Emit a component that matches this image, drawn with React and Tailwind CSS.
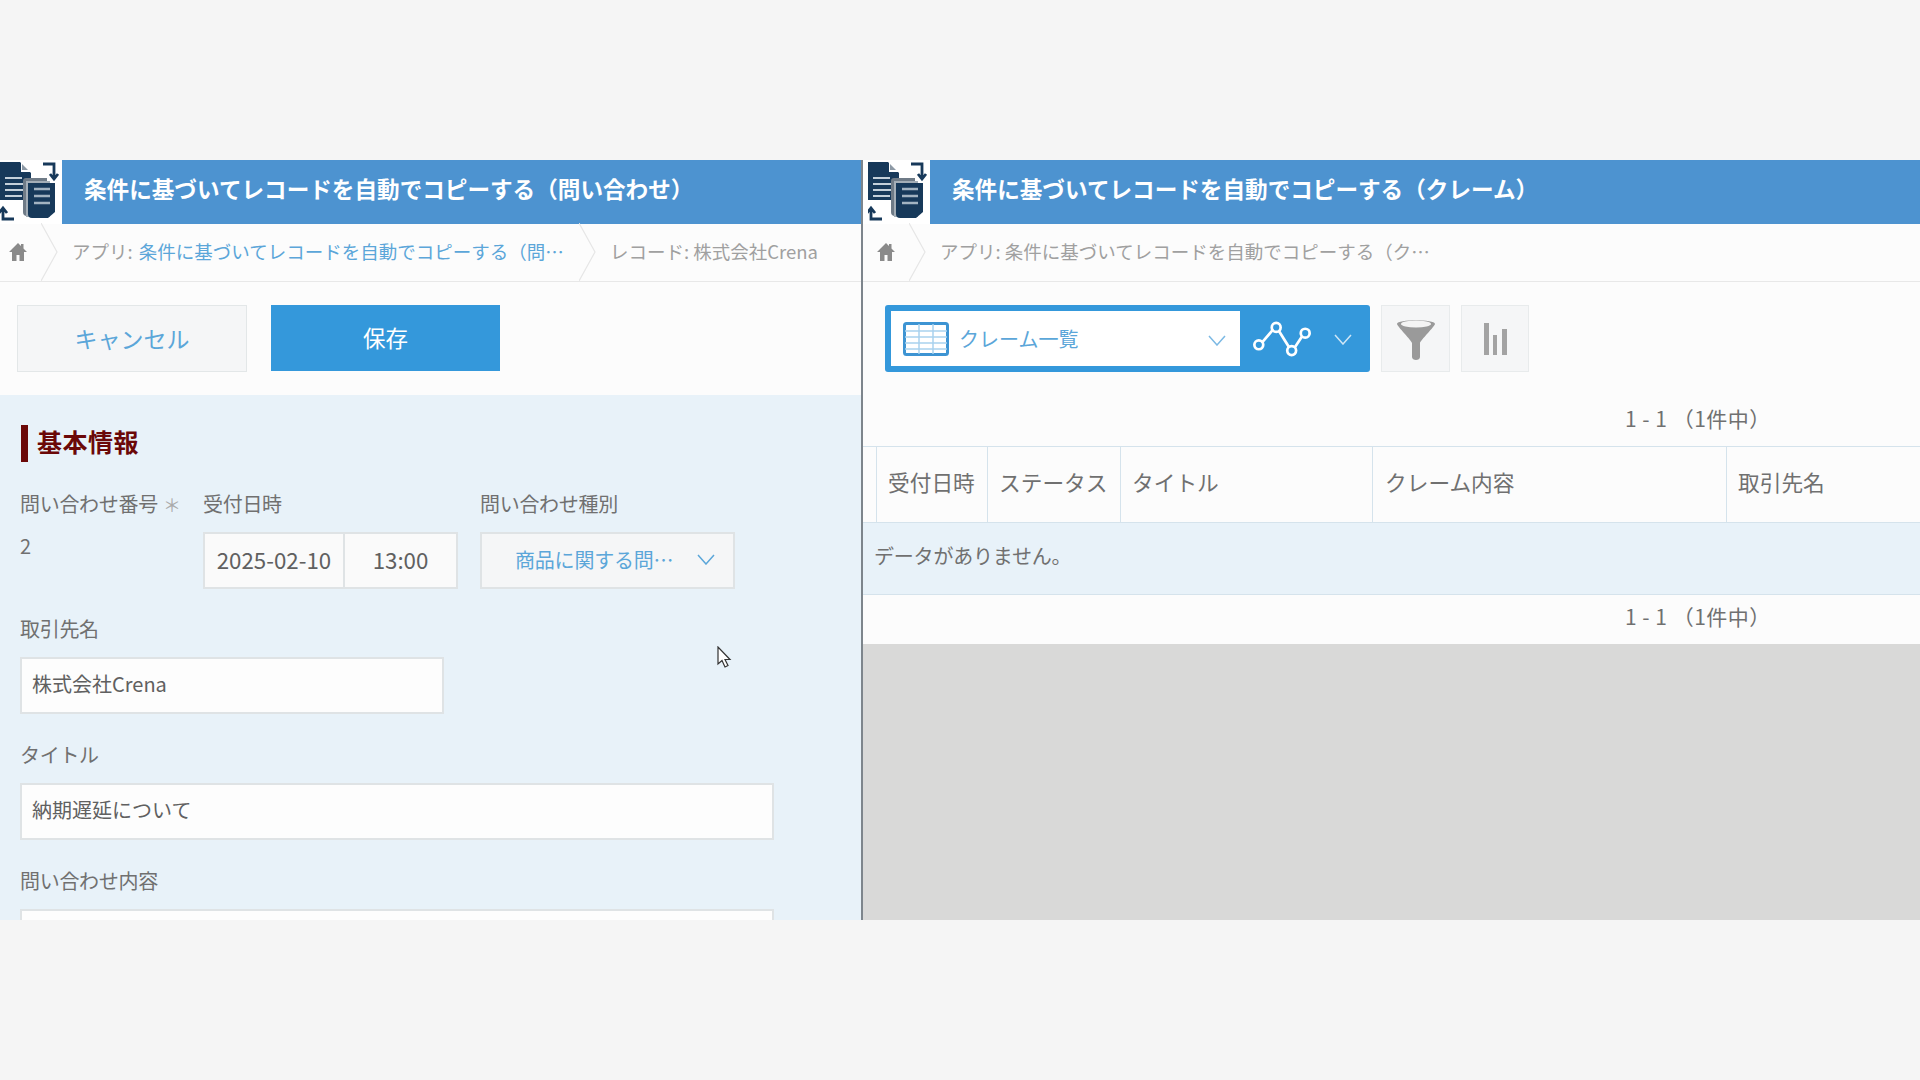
import React from "react";

const Logo = () => (
  <svg viewBox="0 0 62 64" className="w-[62px] h-[64px] shrink-0 block">
    <path d="M0 2H20L31 13V40H0Z" fill="#17395a" />
    <path d="M21 1L32 12H21Z" fill="#fff" />
    <path d="M22 4L28 10H22Z" fill="#8d99a5" />
    <path d="M5 18H22M5 24H23M5 30H23M5 36H22" stroke="#c4d0da" strokeWidth="2.2" />
    <path d="M23 21Q23 18 26 18H47V56H27Q23 56 23 52Z" fill="#6f7b87" />
    <path d="M26 21H50V57H26Z" fill="#a4aeb7" />
    <path d="M28 23H55V52L48 58H32Q28 58 28 54Z" fill="#17395a" />
    <path d="M34 29H50M34 36H50M34 43H50" stroke="#a3b3c1" strokeWidth="2.4" />
    <path d="M43 4H54V17M50 14L54 19L58 14" stroke="#17395a" strokeWidth="2.8" fill="none" />
    <path d="M3 49V59H14M-1 53L3 48L7 53" stroke="#17395a" strokeWidth="2.8" fill="none" />
  </svg>
);

const Home = () => (
  <svg viewBox="0 0 20 20" className="w-[20px] h-[20px] block">
    <path d="M10 1L1 10H4V19H8.5V13H11.5V19H16V10H19L15.5 6.5V2H13V4Z" fill="#8a8a8a" />
  </svg>
);

const Sep = () => (
  <svg viewBox="0 0 18 58" className="w-[18px] h-[58px] shrink-0 block">
    <path d="M0 0L16 29L0 58" fill="none" stroke="#e6e6e6" strokeWidth="1.2" />
  </svg>
);

const Chev = ({ color, w = 18, className = "" }) => (
  <svg viewBox="0 0 18 11" style={{ width: w }} className={`block shrink-0 ${className}`}>
    <path d="M1 1L9 10L17 1" fill="none" stroke={color} strokeWidth="1.5" />
  </svg>
);

const Label = ({ children, className = "" }) => (
  <div className={`text-[20px] leading-[28px] text-[#707070] tracking-[-0.3px] whitespace-nowrap ${className}`}>{children}</div>
);

const TextInput = ({ className, children }) => (
  <div className={`h-[57px] bg-[#fdfdfd] border-2 border-[#dfe3e5] flex items-center px-[10px] pb-[3px] text-[20px] text-[#606060] whitespace-nowrap ${className}`}>
    {children}
  </div>
);

const Pager = ({ className }) => (
  <div className={`shrink-0 flex items-center pl-[762px] text-[21px] tracking-[0.5px] text-[#707070] whitespace-pre ${className}`}>1 - 1 （1件中）</div>
);

const columns = [
  ["w-[14px]", ""],
  ["w-[111px] pl-[11px]", "受付日時"],
  ["w-[133px] pl-[11px]", "ステータス"],
  ["w-[252px] pl-[11px]", "タイトル"],
  ["w-[354px] pl-[12px]", "クレーム内容"],
  ["flex-1 pl-[11px]", "取引先名"],
];

const Title = ({ children }) => (
  <div className="flex-1 min-w-0 bg-[#4d93d0] flex items-center pl-[22px] pb-[6px] text-white font-bold text-[22.6px] whitespace-nowrap">
    {children}
  </div>
);

export default function App() {
  return (
    <div className="w-[1920px] h-[1080px] overflow-hidden bg-[#f5f5f5] flex flex-col pt-[160px] font-['Noto_Sans_CJK_JP','Noto_Sans',sans-serif] relative">
      <div className="flex h-[760px]">
        {/* Left */}
        <div className="w-[861px] flex flex-col overflow-hidden bg-[#fcfcfc]">
          <div className="flex h-[64px] shrink-0 bg-white">
            <Logo />
            <Title>条件に基づいてレコードを自動でコピーする（問い合わせ）</Title>
          </div>
          <div className="h-[58px] shrink-0 flex items-center border-b border-[#e8e8e8] pl-[8px] pb-[2px] text-[18.5px] text-[#a0a0a0] whitespace-nowrap">
            <div className="w-[33px]"><Home /></div>
            <Sep />
            <div className="ml-[13px] w-[507px]">アプリ: <span className="ml-[2px] text-[#5ba6d9]">条件に基づいてレコードを自動でコピーする（問…</span></div>
            <Sep />
            <div className="ml-[13px]">レコード: 株式会社Crena</div>
          </div>
          <div className="h-[113px] shrink-0 flex items-center pl-[17px] gap-[24px] pb-[1px]">
            <div className="w-[230px] h-[67px] bg-[#f5f6f7] border border-[#e3e7e8] flex items-center justify-center text-[23px] text-[#5ba6d9]">キャンセル</div>
            <div className="w-[229px] h-[66px] bg-[#3498db] flex items-center justify-center text-[22.5px] text-white">保存</div>
          </div>
          <div className="flex-1 overflow-hidden bg-[#e8f2f9] pl-[20px]">
            <div className="mt-[30px] flex items-center h-[37px] ml-[1px] border-l-[7px] border-[#6b0808] pl-[9px] pb-[4px] text-[25px] font-bold text-[#6b0808] tracking-[0.5px]">基本情報</div>
            <div className="flex mt-[28px]">
              <div className="w-[183px]">
                <Label>問い合わせ番号 <span className="text-[#aaaaaa] text-[18px] ml-[1px]">＊</span></Label>
                <div className="mt-[14px] text-[20px] leading-[28px] text-[#707070]">2</div>
              </div>
              <div className="w-[277px]">
                <Label>受付日時</Label>
                <div className="flex mt-[14px]">
                  <div className="w-[142px] h-[57px] bg-[#fafafa] border-2 border-[#dfe3e5] flex items-center justify-center pb-[2px] text-[22.3px] text-[#606060]">2025-02-10</div>
                  <div className="w-[113px] h-[57px] bg-[#fafafa] border-2 border-l-0 border-[#dfe3e5] flex items-center justify-center pb-[2px] text-[22.3px] text-[#606060]">13:00</div>
                </div>
              </div>
              <div>
                <Label>問い合わせ種別</Label>
                <div className="mt-[14px] w-[255px] h-[57px] bg-[#f5f6f7] border-2 border-[#dfe3e5] flex items-center pl-[33px] pr-[18px] pb-[2px] justify-between text-[20px] text-[#5ba6d9] tracking-[-0.2px]">
                  <span className="whitespace-nowrap">商品に関する問…</span>
                  <Chev color="#5ba6d9" />
                </div>
              </div>
            </div>
            <Label className="mt-[26px]">取引先名</Label>
            <TextInput className="mt-[14px] w-[424px]">株式会社Crena</TextInput>
            <Label className="mt-[27px]">タイトル</Label>
            <TextInput className="mt-[14px] w-[754px]">納期遅延について</TextInput>
            <Label className="mt-[27px]">問い合わせ内容</Label>
            <TextInput className="mt-[14px] w-[754px]"></TextInput>
          </div>
        </div>
        <div className="w-[2px] bg-[#7d858c]" />
        {/* Right */}
        <div className="flex-1 min-w-0 flex flex-col overflow-hidden bg-[#d9d9d8]">
          <div className="flex h-[64px] shrink-0 bg-white pl-[5px]">
            <Logo />
            <Title>条件に基づいてレコードを自動でコピーする（クレーム）</Title>
          </div>
          <div className="h-[58px] shrink-0 flex items-center border-b border-[#e8e8e8] bg-[#fcfcfc] pl-[13px] pb-[2px] text-[18.5px] text-[#a0a0a0] whitespace-nowrap">
            <div className="w-[33px]"><Home /></div>
            <Sep />
            <div className="ml-[13px]">アプリ: 条件に基づいてレコードを自動でコピーする（ク…</div>
          </div>
          <div className="bg-[#fcfcfc] h-[164px] shrink-0 flex flex-col pt-[23px]">
            <div className="flex items-start pl-[22px] h-[67px] shrink-0">
              <div className="w-[485px] h-[67px] rounded-[3px] bg-[#3498db] flex items-center pl-[6px] pr-[18px]">
                <div className="w-[349px] h-[55px] bg-white flex items-center pl-[12px] pr-[14px] text-[20px] text-[#5ba6d9]">
                  <svg viewBox="0 0 46 34" className="w-[46px] h-[34px] shrink-0">
                    <rect x="1.5" y="1.5" width="43" height="31" rx="2" fill="#fff" stroke="#3d94d3" strokeWidth="3" />
                    <path d="M2 9H44M2 15H44M2 21H44M2 27H44M16 2V32M30 2V32" stroke="#a9d2ee" strokeWidth="1.5" />
                  </svg>
                  <span className="ml-[10px] flex-1">クレーム一覧</span>
                  <Chev color="#7cb9e4" className="mt-[3px]" />
                </div>
                <svg viewBox="0 0 60 36" className="ml-[13px] w-[58px] h-[36px] shrink-0">
                  <path d="M9 22L21 8M27 10L37 26M43 27L51 15" stroke="#fff" strokeWidth="2.8" fill="none" />
                  <circle cx="6" cy="24" r="4.6" fill="none" stroke="#fff" strokeWidth="2.8" />
                  <circle cx="24" cy="6" r="4.6" fill="none" stroke="#fff" strokeWidth="2.8" />
                  <circle cx="40" cy="30" r="4.6" fill="none" stroke="#fff" strokeWidth="2.8" />
                  <circle cx="54" cy="12" r="4.6" fill="none" stroke="#fff" strokeWidth="2.8" />
                </svg>
                <div className="flex-1" />
                <Chev color="#cfe6f6" className="mt-[2px]" />
              </div>
              <div className="ml-[11px] w-[69px] h-[67px] bg-[#f5f6f7] border border-[#e8ebec] flex items-center justify-center">
                <svg viewBox="0 0 40 44" className="w-[40px] h-[44px]">
                  <path d="M1 7C1 2 39 2 39 7C39 9 24 24 24 26V40C24 44 16 44 16 40V26C16 24 1 9 1 7Z" fill="#9a9a9a" />
                  <ellipse cx="20" cy="7" rx="15" ry="3.4" fill="#f4f4f4" />
                </svg>
              </div>
              <div className="ml-[11px] w-[68px] h-[67px] bg-[#f5f6f7] border border-[#e8ebec] flex items-center justify-center">
                <svg viewBox="0 0 26 32" className="w-[26px] h-[32px]">
                  <path d="M2 0H7V32H2ZM11 12H15V32H11ZM20 6H25V32H20Z" fill="#a3a3a3" />
                </svg>
              </div>
            </div>
            <Pager className="h-[54px] mt-[20px]" />
          </div>
          <div className="flex h-[77px] shrink-0 bg-[#fcfcfc] border-y border-[#d5e3ec] text-[21.7px] text-[#707070]">
            {columns.map(([w, t], i) => (
              <div key={i} className={`${w} ${i < 5 ? "border-r border-[#d5e3ec]" : ""} flex items-center pb-[5px] whitespace-nowrap shrink-0`}>{t}</div>
            ))}
          </div>
          <div className="h-[72px] shrink-0 bg-[#e8f2f9] border-b border-[#d5e3ec] flex items-center pl-[11px] pb-[5px] text-[20px] text-[#707070] tracking-[-0.2px]">データがありません。</div>
          <Pager className="h-[49px] bg-[#fcfcfc] pb-[5px]" />
        </div>
      </div>
      <svg viewBox="0 0 16 24" className="absolute left-[717px] top-[646px] w-[16px] h-[24px]">
        <path d="M1 1V18L5 14.5L8 21L11 19.5L8 13.5H13Z" fill="#fff" stroke="#333" strokeWidth="1.2" />
      </svg>
    </div>
  );
}
